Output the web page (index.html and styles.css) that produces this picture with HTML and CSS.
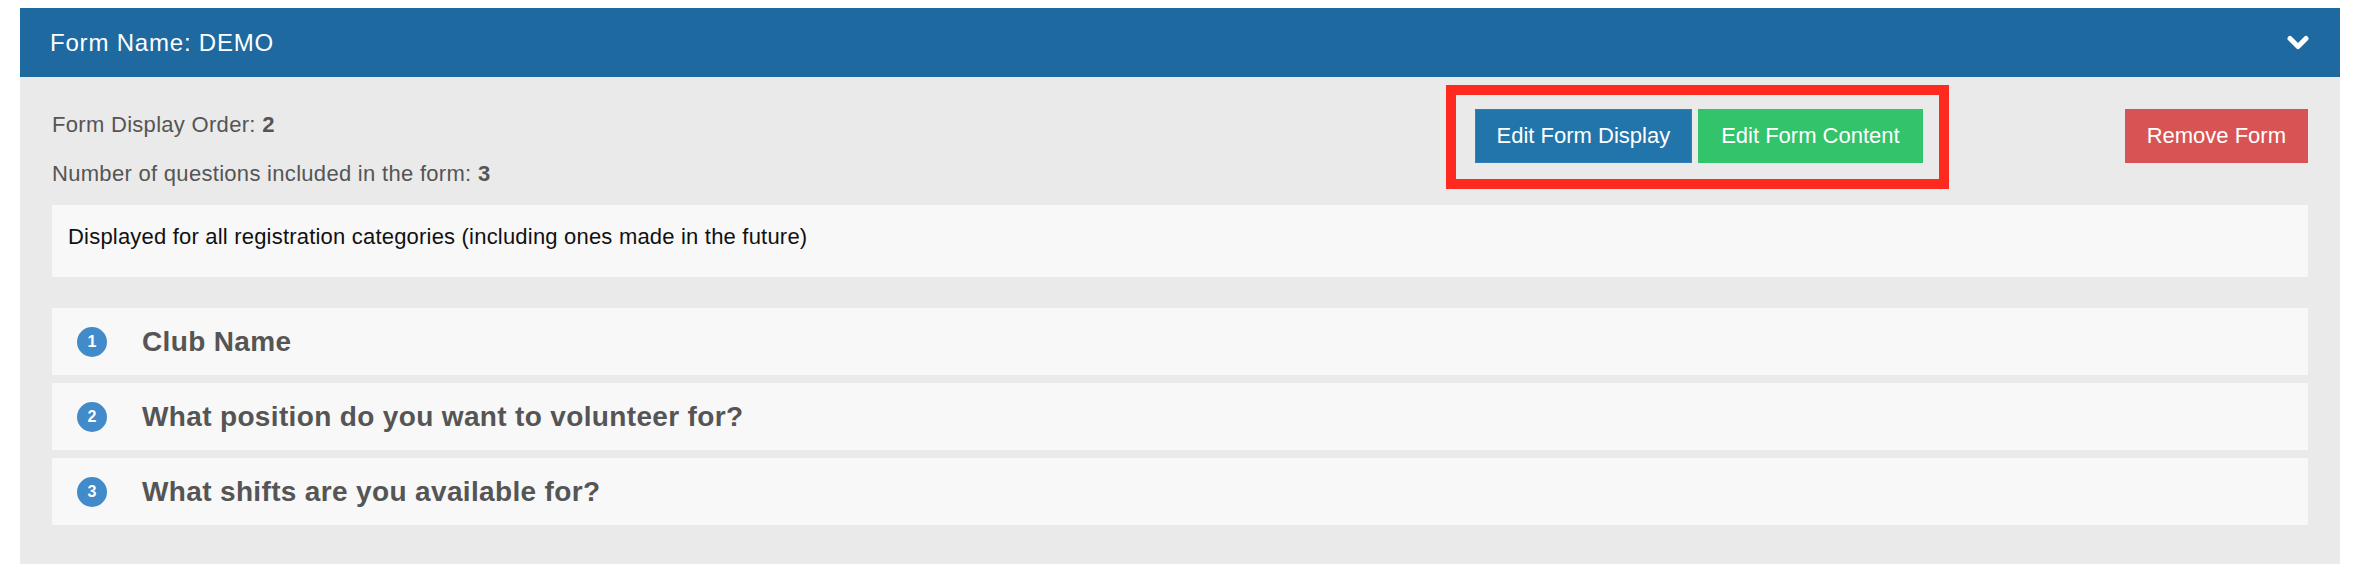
FILE: index.html
```html
<!DOCTYPE html>
<html lang="en">
<head>
    <meta charset="UTF-8">
    <meta name="viewport" content="width=device-width, initial-scale=1.0">
    <title>Form Name: DEMO</title>
    <link rel="stylesheet" href="styles.css">
</head>
<body>
    <div class="panel">
        <!-- Panel header -->
        <div class="panel-heading">
            <span class="panel-title">Form Name: DEMO</span>
            <svg class="chevron" width="22" height="15" viewBox="0 0 22 15">
                <path d="M3 3.5 L11 11.5 L19 3.5" fill="none" stroke="#fff" stroke-width="5" stroke-linecap="round" stroke-linejoin="round"/>
            </svg>
        </div>

        <div class="panel-body">
            <div class="top-row">
                <div class="form-info">
                    <p>Form Display Order: <strong>2</strong></p>
                    <p>Number of questions included in the form: <strong>3</strong></p>
                </div>
                <div class="highlight">
                    <button class="btn btn-primary">Edit Form Display</button>
                    <button class="btn btn-success">Edit Form Content</button>
                </div>
                <button class="btn btn-danger">Remove Form</button>
            </div>

            <div class="form-note">Displayed for all registration categories (including ones made in the future)</div>

            <!-- Questions -->
            <div class="question-list">
                <div class="question">
                    <span class="badge">1</span>
                    <span class="question-title">Club Name</span>
                </div>
                <div class="question">
                    <span class="badge">2</span>
                    <span class="question-title">What position do you want to volunteer for?</span>
                </div>
                <div class="question">
                    <span class="badge">3</span>
                    <span class="question-title">What shifts are you available for?</span>
                </div>
            </div>
        </div>
    </div>
</body>
</html>
```

FILE: styles.css
```css
body {
    font-family: "Helvetica Neue", "Liberation Sans", Arial, sans-serif;
    margin: 0;
    padding: 8px 20px 0;
    background-color: #fff;
    color: #555;
}
.panel {
    background: #eaeaea;
}
.panel-heading {
    display: flex;
    align-items: center;
    justify-content: space-between;
    height: 69px;
    padding: 0 31px 0 30px;
    background: #1d69a0;
    color: #fff;
}
.panel-title {
    font-size: 24px;
    letter-spacing: 0.8px;
}
.chevron {
    display: block;
}
.panel-body {
    padding: 32px 32px 39px;
}
.top-row {
    display: flex;
    align-items: flex-start;
}
.form-info {
    flex: 1;
    font-size: 22px;
    letter-spacing: 0.3px;
}
.form-info p {
    margin: 0;
    line-height: 32px;
}
.form-info p + p {
    margin-top: 17px;
}
.highlight {
    display: flex;
    gap: 6px;
    margin-top: -24px;
    padding: 14px 16px 16px 19px;
    border: 10px solid #ff2a1f;
}
.btn {
    display: flex;
    align-items: center;
    height: 54px;
    padding: 0 21px;
    border: 1px solid transparent;
    border-radius: 0;
    font-family: inherit;
    font-size: 22px;
    color: #fff;
    cursor: pointer;
}
.btn-primary {
    background: #2275ab;
    border-color: #337fbd;
}
.btn-success {
    background: #32c36b;
    border-color: #32c36b;
    padding: 0 22px;
}
.btn-danger {
    background: #d85454;
    border-color: #d85454;
    margin-left: 176px;
}
.form-note {
    margin-top: 15px;
    padding: 16px 16px 24px;
    background: #f8f8f8;
    color: #111;
    font-size: 22px;
    line-height: 32px;
    letter-spacing: 0.2px;
}
.question-list {
    display: flex;
    flex-direction: column;
    gap: 8px;
    margin-top: 31px;
}
.question {
    display: flex;
    align-items: center;
    height: 67px;
    padding-left: 25px;
    background: #f8f8f8;
}
.badge {
    display: flex;
    align-items: center;
    justify-content: center;
    width: 30px;
    height: 30px;
    border-radius: 50%;
    background: #428bca;
    color: #fff;
    font-size: 16px;
    font-weight: bold;
}
.question-title {
    margin-left: 35px;
    font-size: 28px;
    font-weight: bold;
    letter-spacing: 0.35px;
    color: #555;
}
```
